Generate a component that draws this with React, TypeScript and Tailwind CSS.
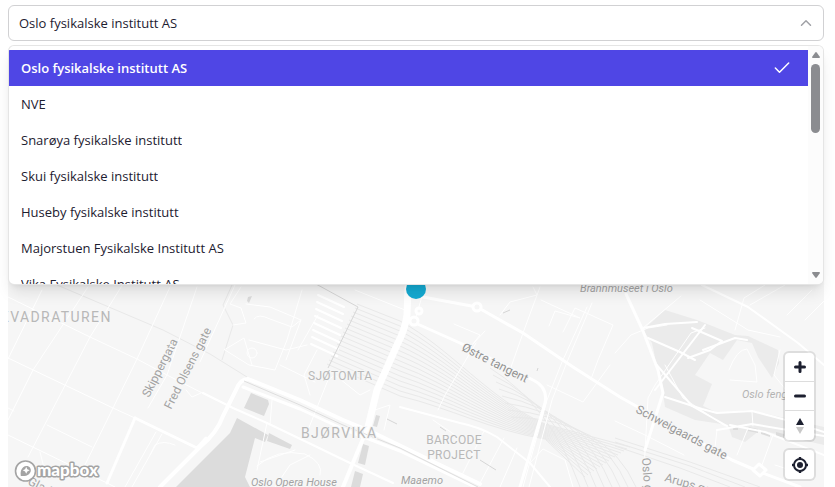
import React, { useState } from "react";
import { CheckIcon, ChevronUpIcon } from "lucide-react";

const institutes = [
  "Oslo fysikalske institutt AS",
  "NVE",
  "Snarøya fysikalske institutt",
  "Skui fysikalske institutt",
  "Huseby fysikalske institutt",
  "Majorstuen Fysikalske Institutt AS",
  "Vika Fysikalske Institutt AS",
];

const thinRoads = [
  "M8 297L90 337L137 359L167 375L210 397L233 408",
  "M8 358L113 408L135 418",
  "M8 435L107 483L115 487",
  "M47 425L92 447M8 408L14 411",
  "M42 290L8 359",
  "M88 287L33 370L8 420",
  "M123 284L90 337L28 457",
  "M170 287L137 359L113 408L80 475",
  "M197 287L167 375L148 408",
  "M235 285L200 362",
  "M156 432L125 487M162 434L132 487M150 455L155 445Q163 440 175 445",
  "M40 452L44 468L34 474M186 390L192 397L201 393",
  "M267 423L257 470M317 350L304 375L310 395M272 400L270 425",
  "M257 466Q277 448 305 454Q324 463 320 475M260 462L295 450M275 487L290 465L310 455",
  "M233 325L246 323L241 308L230 304L241 287M225 350L249 365L275 370L287 340L302 290",
  "M254 319Q258 313 270 319L292 327L301 320L270 307L246 304M249 340L286 350L307 345",
  "M224 350L244 338L252 365M280 365L315 382M301 320L286 360M318 315L298 350",
  "M308 430L328 380L335 375L360 395L370 390",
  "M355 290L405 310M423 293L415 320M500 315L510 302L537 295L533 287",
  "M540 287L523 333M541 300L580 318L555 311L549 326M563 332L575 308L613 325L598 360L591 379",
  "M587 307L562 362L547 400L523 487M592 303L567 362L552 400L529 487",
  "M547 385L583 402L610 365M523 333L510 370M454 324L480 335L472 345L485 331",
  "M476 343L445 395L438 410M484 431L462 475M504 438L480 483M517 448L500 487",
  "M530 463L543 449L565 460L573 487M433 420L455 435M375 410L390 405L384 430",
  "M615 353L631 335L648 328L667 325M643 328L681 296",
  "M705 328L691 333L655 385L648 398L644 470M665 365L683 398L725 426",
  "M735 330L744 298L765 285M750 305L785 285M805 320L825 300M787 315L812 290",
  "M729 370Q737 349 747 349L755 365L757 382L730 380M780 350L774 375L790 395",
  "M717 430L715 447M748 428L737 455M773 435L762 465M615 421L645 435L684 455",
  "M752 412L753 426M775 465L790 470M700 300L748 330L780 337",
];

const mediumRoads = [
  "M203 393L233 408L267 423L317 447L350 463L393 483",
  "M400 407L460 423Q480 427 497 437L530 463L550 487",
  "M702 285L748 307L798 343L824 365",
  "M643 328L665 324L697 322",
  "M655 390L705 325M692 328L722 341L710 350L688 358",
  "M648 338L680 352L695 360M655 363L692 406L727 426",
  "M703 350L735 338L747 340M665 397L702 409L717 413L752 411L790 421L824 432",
  "M717 430L752 424L824 436M730 425L765 432L824 455",
];

const wideRoads = [
  "M135 418L197 448L206 438",
  "M135 418L107 483",
  "M477 307L523 333L573 367L620 397L732 460L760 472L800 487",
  "M413 322L460 343L533 380Q548 387 545 403L533 443L520 487",
  "M423 297L477 307",
  "M626 294L643 331L658 370L663 393L645 450",
];

// tracks running east from the platforms, meeting at the throat and fanning out again
const tracks = Array.from({ length: 16 }, (_, i) => {
  const left = 304 + i * 4;
  const mid = 333 + i * 4;
  const end = 424 + i;
  return `M${357 - i * 2} ${left}L400 ${mid - 12 + i}C450 ${mid + 15} 490 ${400 + i * 2} 545 ${end}T${630 - i * 3} ${447 + i * 2}`;
});

const bends = Array.from({ length: 8 }, (_, i) => {
  const x = 560 + i * 8;
  return `M${490 + i * 3} ${368 + i * 7}Q${x - 10} ${405 + i * 2} ${x + 20} 487`;
});

const platforms = Array.from({ length: 8 }, (_, i) => `M${318 - i} ${295 + i * 7}l26 12`);

function CityMap() {
  return (
    <svg
      className="block h-full w-full"
      viewBox="8 61 816 426"
      preserveAspectRatio="xMidYMid slice"
      fontFamily="Roboto, 'Liberation Sans', sans-serif"
      role="img"
      aria-label="Map of Bjørvika, Oslo"
    >
      <rect x="8" y="61" width="816" height="426" fill="#f6f6f6" />

      {/* park */}
      <path
        fill="#ebebeb"
        d="M665 310L697 320L735 335L748 336L778 350L779 363L772 378L758 357L752 343L737 340L723 360L710 353L695 375L712 384L703 406L718 413L750 410L824 427V445L760 430L745 442L732 437L728 425L715 423L695 420L665 407L663 393L657 367L652 343L643 330Z"
      />
      {/* fjord and dark blocks */}
      <g fill="#dcdcdc">
        <path d="M237 418L268 435L265 442L255 438L245 477L250 487H176L200 463L230 433Z" />
        <path d="M251 393L268 400L269 404L264 416L244 408Z" />
        <path d="M269 433L292 445L290 449L267 441Z" />
        <path d="M376 415L380 416L377 427L373 426Z" />
        <path d="M363 444L369 446L365 465L358 463Z" />
        <path d="M355 471L363 474L360 487H351Z" />
        <path d="M248 297L252 296L249 303L247 301Z" />
        <path d="M733 426h5v4h-5zM748 427l10 2v4l-10-2zM761 430l9 3v4l-9-3zM776 432l8 2v4l-8-2z" />
      </g>

      <g fill="none" stroke="#e9e9e9" strokeWidth="1">
        {tracks.map((d) => (
          <path key={d} d={d} />
        ))}
        {bends.map((d) => (
          <path key={d} d={d} />
        ))}
        <path d="M57 285L163 330L210 354L247 377M232 285L223 305L233 325L222 360M615 438L690 462L760 487M615 442L690 466L745 487M615 446L680 468L730 487" />
      </g>

      <g fill="none" stroke="#fff" strokeLinejoin="round" strokeLinecap="round">
        {thinRoads.map((d) => (
          <path key={d} d={d} strokeWidth="1" />
        ))}
        {mediumRoads.map((d) => (
          <path key={d} d={d} strokeWidth="2" />
        ))}
        {wideRoads.map((d) => (
          <path key={d} d={d} strokeWidth="3" />
        ))}
        {platforms.map((d) => (
          <path key={d} d={d} strokeWidth="2" />
        ))}
        <path d="M160 487L200 447Q217 433 223 416L236 390Q240 379 248 379L300 400L343 420L370 431L440 465L480 484" strokeWidth="4" />
        <path d="M243 387L300 409L343 429L400 451L475 487" strokeWidth="3" />
        <path d="M408 287L407 315Q405 330 397 345L377 390L368 427" strokeWidth="7" />
        <path d="M368 427L357 453L343 487" strokeWidth="4" />
        <g fill="#f6f6f6" strokeWidth="3">
          <circle cx="477" cy="307" r="4" />
          <circle cx="414" cy="321" r="4" />
          <circle cx="419" cy="311" r="3" />
          <path d="M753 470l6-6 7 6-6 6z" />
        </g>
        <circle cx="252" cy="353" r="5" strokeWidth="1" />
      </g>
      <g fill="none" stroke="#d6d6d6" strokeWidth="1">
        <path d="M244 381L300 405L343 425L400 448L478 487" stroke="#dedede" />
        <path d="M316 284L358 307L328 368M387 419L397 424" />
        <path d="M503 313L510 310M538 368L537 371M440 427L446 431M480 460L496 470" />
      </g>

      <g fill="#b8b8b8" stroke="#f7f7f7" strokeWidth="2" paintOrder="stroke">
        <g className="text-[14px] tracking-widest">
          <text x="0" y="322">KVADRATUREN</text>
          <text x="301" y="438">BJØRVIKA</text>
        </g>
        <g className="text-[12px] tracking-wide">
          <text x="308" y="380">SJØTOMTA</text>
          <text x="454" y="444" textAnchor="middle">BARCODE</text>
          <text x="454" y="459" textAnchor="middle">PROJECT</text>
        </g>
      </g>
      <g className="text-[12px]" fill="#a3a3a3" stroke="#f7f7f7" strokeWidth="2" paintOrder="stroke">
        <text transform="translate(149 398) rotate(-63)">Skippergata</text>
        <text transform="translate(171 410) rotate(-63)">Fred Olsens gate</text>
        <text transform="translate(461 350) rotate(27)" fill="#929292">Østre tangent</text>
        <text transform="translate(635 412) rotate(28)" fill="#999">Schweigaards gate</text>
        <text transform="translate(642 458) rotate(86)">Oslo gate</text>
        <text transform="translate(664 481) rotate(16)">Arups gate</text>
        <text transform="translate(27 484) rotate(27)">Gladengveien</text>
        <g className="text-[11px]" fontStyle="italic">
          <text x="251" y="486">Oslo Opera House</text>
          <text x="401" y="484">Maaemo</text>
          <text x="580" y="292">Brannmuseet i Oslo</text>
          <text x="742" y="398" fill="#b3b3b3">Oslo fengsel</text>
        </g>
      </g>
      <circle cx="416" cy="289" r="10" fill="#14aad2" />
    </svg>
  );
}

function MapboxLogo() {
  return (
    <a href="#mapbox" aria-label="Mapbox homepage" className="absolute bottom-1 left-1.5">
      <svg width="90" height="24" viewBox="0 0 90 24" fontFamily="Lato, sans-serif">
        <circle cx="11.5" cy="12" r="10" fill="#fff" stroke="#a4a4a4" strokeWidth="1.6" />
        <path d="M6.8 17C6.1 12.6 7.3 9.8 9.2 8.2C11.5 6.2 14.7 6.7 16.1 8.8C17.6 11 16.8 13.6 14.9 15.2C13.1 16.8 10 17.4 6.8 17Z" fill="#a4a4a4" />
        <path d="M12.2 7.8l1.1 2.4 2.4 1.1-2.4 1.1-1.1 2.4-1.1-2.4-2.4-1.1 2.4-1.1z" fill="#fff" />
        <text x="23" y="17" className="text-[17px] font-black" fill="#fff" stroke="#a4a4a4" strokeWidth="3" strokeLinejoin="round" paintOrder="stroke">
          mapbox
        </text>
      </svg>
    </a>
  );
}

function MapControls() {
  return (
    <div className="absolute right-2.5 bottom-2 flex flex-col gap-2.5">
      <div className="flex flex-col divide-y divide-[#ddd] rounded bg-white ring-2 ring-black/10">
        <button type="button" aria-label="Zoom in" className="flex h-[29px] w-[29px] items-center justify-center">
          <svg className="h-3 w-3" viewBox="0 0 12 12" fill="none" stroke="#1d2030" strokeWidth="3" strokeLinecap="round">
            <path d="M6 1.5v9M1.5 6h9" />
          </svg>
        </button>
        <button type="button" aria-label="Zoom out" className="flex h-[29px] w-[29px] items-center justify-center">
          <svg className="h-3 w-3" viewBox="0 0 12 12" fill="none" stroke="#1d2030" strokeWidth="3" strokeLinecap="round">
            <path d="M1.5 6h9" />
          </svg>
        </button>
        <button type="button" aria-label="Reset bearing to north" className="flex h-[29px] w-[29px] items-center justify-center">
          <svg className="h-4 w-2" viewBox="0 0 8 16">
            <path d="M0 7L4 0L8 7Z" fill="#1d2030" />
            <path d="M0 9L4 16L8 9Z" fill="#c8c8c8" />
          </svg>
        </button>
      </div>
      <div className="rounded bg-white ring-2 ring-black/10">
        <button type="button" aria-label="Find my location" className="flex h-[29px] w-[29px] items-center justify-center">
          <svg className="h-4 w-4" viewBox="0 0 16 16" fill="none" stroke="#1d2030" strokeWidth="2">
            <circle cx="8" cy="8" r="6" />
            <circle cx="8" cy="8" r="3" fill="#1d2030" stroke="none" />
            <path d="M8 0v2M8 14v2M0 8h2M14 8h2" strokeWidth="2.4" />
          </svg>
        </button>
      </div>
    </div>
  );
}

function InstituteSelect() {
  const [open, setOpen] = useState(true);
  const [selected, setSelected] = useState(institutes[0]);

  return (
    <div className="relative z-10">
      <div className="flex h-9 items-center rounded-md border border-[#d1d1d3] bg-white pr-2">
        <input
          type="text"
          role="combobox"
          aria-label="Institute"
          aria-expanded={open}
          aria-controls="institutes"
          readOnly
          value={selected}
          className="min-w-0 flex-1 bg-transparent pl-2.5 text-[13px] leading-5 text-[#1d2030] outline-none"
        />
        <button type="button" aria-label="Toggle list" onClick={() => setOpen(!open)}>
          <ChevronUpIcon className="h-[18px] w-[18px] text-[#a0a1a6]" strokeWidth={2} />
        </button>
      </div>

      {open && (
        <div className="absolute inset-x-0 top-full mt-1 flex h-60 overflow-hidden rounded-md border border-black/10 bg-white shadow-lg">
          <ul id="institutes" role="listbox" aria-label="Institute" className="flex-1 overflow-hidden py-1">
            {institutes.map((name) => (
              <li
                key={name}
                role="option"
                aria-selected={name === selected}
                onClick={() => setSelected(name)}
                className={
                  name === selected
                    ? "flex items-center justify-between bg-[#4f46e5] py-2 pr-4 pl-3 text-[13px] leading-5 font-semibold text-white"
                    : "flex items-center justify-between py-2 pr-4 pl-3 text-[13px] leading-5 text-[#1d2030]"
                }
              >
                <span className="truncate">{name}</span>
                {name === selected && <CheckIcon className="h-5 w-5" strokeWidth={1.8} />}
              </li>
            ))}
          </ul>
          <div aria-hidden="true" className="flex w-[15px] flex-col items-center bg-[#fcfcfc] py-1.5">
            <svg className="h-1.5 w-2" viewBox="0 0 8 6" fill="#8b8c90">
              <path d="M3.3.5Q4 -.3 4.7.5L8 5Q8 6 7 6H1Q0 6 0 5Z" />
            </svg>
            <div className="mt-1.5 h-[69px] w-[9px] rounded-full bg-[#8b8c90]" />
            <svg className="mt-auto h-1.5 w-2" viewBox="0 0 8 6" fill="#8b8c90">
              <path d="M3.3 5.5Q4 6.3 4.7 5.5L8 1Q8 0 7 0H1Q0 0 0 1Z" />
            </svg>
          </div>
        </div>
      )}
    </div>
  );
}

function App() {
  return (
    <main className="flex h-screen flex-col gap-5 overflow-hidden bg-white pt-[5px] pr-[11px] pl-2 font-['Open_Sans','Noto_Sans',sans-serif]">
      <InstituteSelect />
      <section aria-label="Map" className="relative min-h-0 flex-1 overflow-hidden">
        <CityMap />
        <MapboxLogo />
        <MapControls />
      </section>
    </main>
  );
}

export default App;
